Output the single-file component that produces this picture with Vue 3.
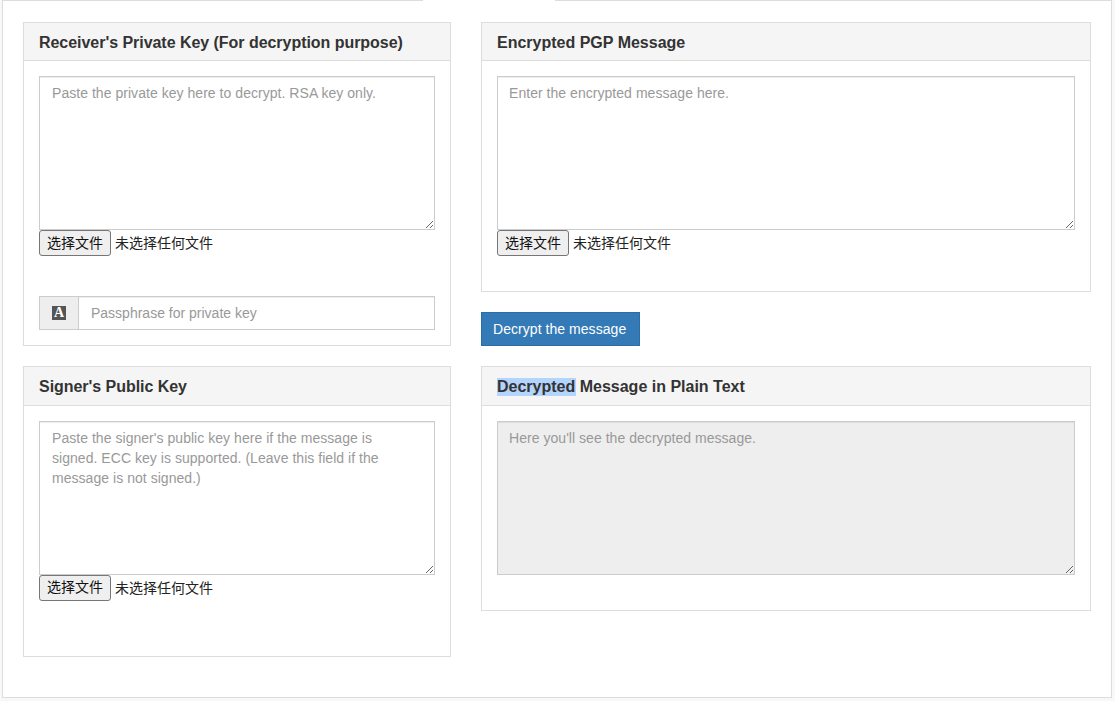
<script setup>
const fileButton = '选择文件'
const fileEmpty = '未选择任何文件'
const signerHint = "Paste the signer's public key here if the message is\nsigned. ECC key is supported. (Leave this field if the\nmessage is not signed.)"
</script>

<template>
  <div class="page">
    <div class="tab-content">
      <div class="active-tab"></div>
      <div class="cols">
        <div class="col">
          <section class="panel">
            <header class="panel-heading"><h3 class="tight">Receiver's Private Key (For decryption purpose)</h3></header>
            <div class="panel-body">
              <textarea class="area" placeholder="Paste the private key here to decrypt. RSA key only."></textarea>
              <div class="file file-wide">
                <button type="button" class="file-btn">{{ fileButton }}</button>
                <span class="file-name">{{ fileEmpty }}</span>
              </div>
              <div class="input-group">
                <span class="addon"><span class="font-icon">A</span></span>
                <input class="input" type="text" placeholder="Passphrase for private key" />
              </div>
            </div>
          </section>
          <section class="panel">
            <header class="panel-heading"><h3 class="tight">Signer's Public Key</h3></header>
            <div class="panel-body">
              <textarea class="area" :placeholder="signerHint"></textarea>
              <div class="file file-wide">
                <button type="button" class="file-btn">{{ fileButton }}</button>
                <span class="file-name">{{ fileEmpty }}</span>
              </div>
            </div>
          </section>
        </div>
        <div class="col">
          <section class="panel">
            <header class="panel-heading"><h3>Encrypted PGP Message</h3></header>
            <div class="panel-body">
              <textarea class="area area-right" placeholder="Enter the encrypted message here."></textarea>
              <div class="file file-narrow">
                <button type="button" class="file-btn">{{ fileButton }}</button>
                <span class="file-name">{{ fileEmpty }}</span>
              </div>
            </div>
          </section>
          <div class="actions">
            <button type="button" class="btn-primary">Decrypt the message</button>
          </div>
          <section class="panel">
            <header class="panel-heading"><h3><span class="selected">Decrypted</span> Message in Plain Text</h3></header>
            <div class="panel-body">
              <textarea class="area area-right area-output" disabled placeholder="Here you'll see the decrypted message."></textarea>
            </div>
          </section>
        </div>
      </div>
    </div>
  </div>
</template>

<style scoped>
.page {
  padding-left: 2px;
  width: 1110px;
  height: 701px;
  font-family: "Liberation Sans", Arial, sans-serif;
  font-size: 14px;
  color: #333;
}
.tab-content {
  position: relative;
  box-sizing: border-box;
  width: 1110px;
  height: 698px;
  padding: 20.6px 20px 0 20px;
  background: #fff;
  border: 1px solid #ddd;
}
.active-tab {
  position: absolute;
  top: -1px;
  left: 419px;
  width: 132px;
  height: 1px;
  background: #fff;
  border-left: 1px solid #ddd;
  border-right: 1px solid #ddd;
}
.cols {
  display: grid;
  grid-template-columns: 428px 610px;
  column-gap: 30px;
  align-items: start;
}
.col {
  display: flex;
  flex-direction: column;
  gap: 20px;
}
.panel {
  border: 1px solid #ddd;
  background: #fff;
}
.panel-heading {
  padding: 11px 15px 9px;
  background: #f5f5f5;
  border-bottom: 1px solid #ddd;
}
h3 {
  margin: 0;
  font-size: 16px;
  line-height: 17.6px;
  font-weight: 700;
  color: #333;
}
.tight {
  letter-spacing: -0.04px;
}
.selected {
  background: #b3d4fc;
  padding: 0 1px 1px 0;
  margin-right: -1px;
}
.panel-body {
  padding: 15px;
}
.area {
  display: block;
  box-sizing: border-box;
  width: 100%;
  height: 154px;
  margin: 0;
  padding: 6px 12px;
  border: 1px solid #ccc;
  border-radius: 0;
  background: #fff;
  box-shadow: inset 0 1px 1px rgba(0, 0, 0, 0.075);
  font-family: "Liberation Sans", Arial, sans-serif;
  font-size: 14px;
  line-height: 20px;
  color: #555;
  outline: none;
}
.area-right {
  padding-left: 11px;
}
.area::placeholder {
  color: #999;
  opacity: 1;
  letter-spacing: 0.04px;
}
.input::placeholder {
  color: #999;
  opacity: 1;
}
.area-output {
  background: #eee;
  margin-bottom: 20px;
}
.file {
  display: flex;
  align-items: center;
  height: 26px;
}
.file-wide {
  margin-bottom: 40px;
}
.file-narrow {
  margin-bottom: 20px;
}
.file-btn {
  box-sizing: border-box;
  width: 72px;
  height: 26px;
  padding: 0 0 1px;
  border: 1px solid #767676;
  border-radius: 3px;
  background: #efefef;
  color: #111;
  font-family: "Liberation Sans", "Noto Sans CJK SC", sans-serif;
  font-size: 14px;
  line-height: 20px;
}
.file-name {
  margin-left: 4px;
  padding-bottom: 2px;
  color: #222;
  font-family: "Liberation Sans", "Noto Sans CJK SC", sans-serif;
  font-size: 14px;
}
.input-group {
  display: flex;
  height: 34px;
}
.addon {
  box-sizing: border-box;
  flex: 0 0 39px;
  display: flex;
  align-items: center;
  justify-content: center;
  background: #eee;
  border: 1px solid #ccc;
  border-right: 0;
}
.font-icon {
  display: block;
  width: 14px;
  height: 14px;
  background: #555;
  color: #fff;
  font-family: "Liberation Serif", serif;
  font-size: 14px;
  font-weight: 700;
  line-height: 14px;
  text-align: center;
}
.input {
  box-sizing: border-box;
  flex: 1;
  min-width: 0;
  height: 34px;
  margin: 0;
  padding: 6px 12px;
  border: 1px solid #ccc;
  border-radius: 0;
  box-shadow: inset 0 1px 1px rgba(0, 0, 0, 0.075);
  font-family: "Liberation Sans", Arial, sans-serif;
  font-size: 14px;
  color: #555;
  outline: none;
}
.actions {
  display: flex;
}
.btn-primary {
  box-sizing: border-box;
  width: 159px;
  height: 34px;
  padding: 6px 0 6px 11px;
  border: 1px solid #2e6da4;
  border-radius: 0;
  background: #337ab7;
  color: #fff;
  font-family: "Liberation Sans", Arial, sans-serif;
  font-size: 14px;
  line-height: 20px;
  letter-spacing: 0.05px;
  text-align: left;
}
</style>

<style>
html, body {
  margin: 0;
  background: #f8f8f8;
}
</style>
